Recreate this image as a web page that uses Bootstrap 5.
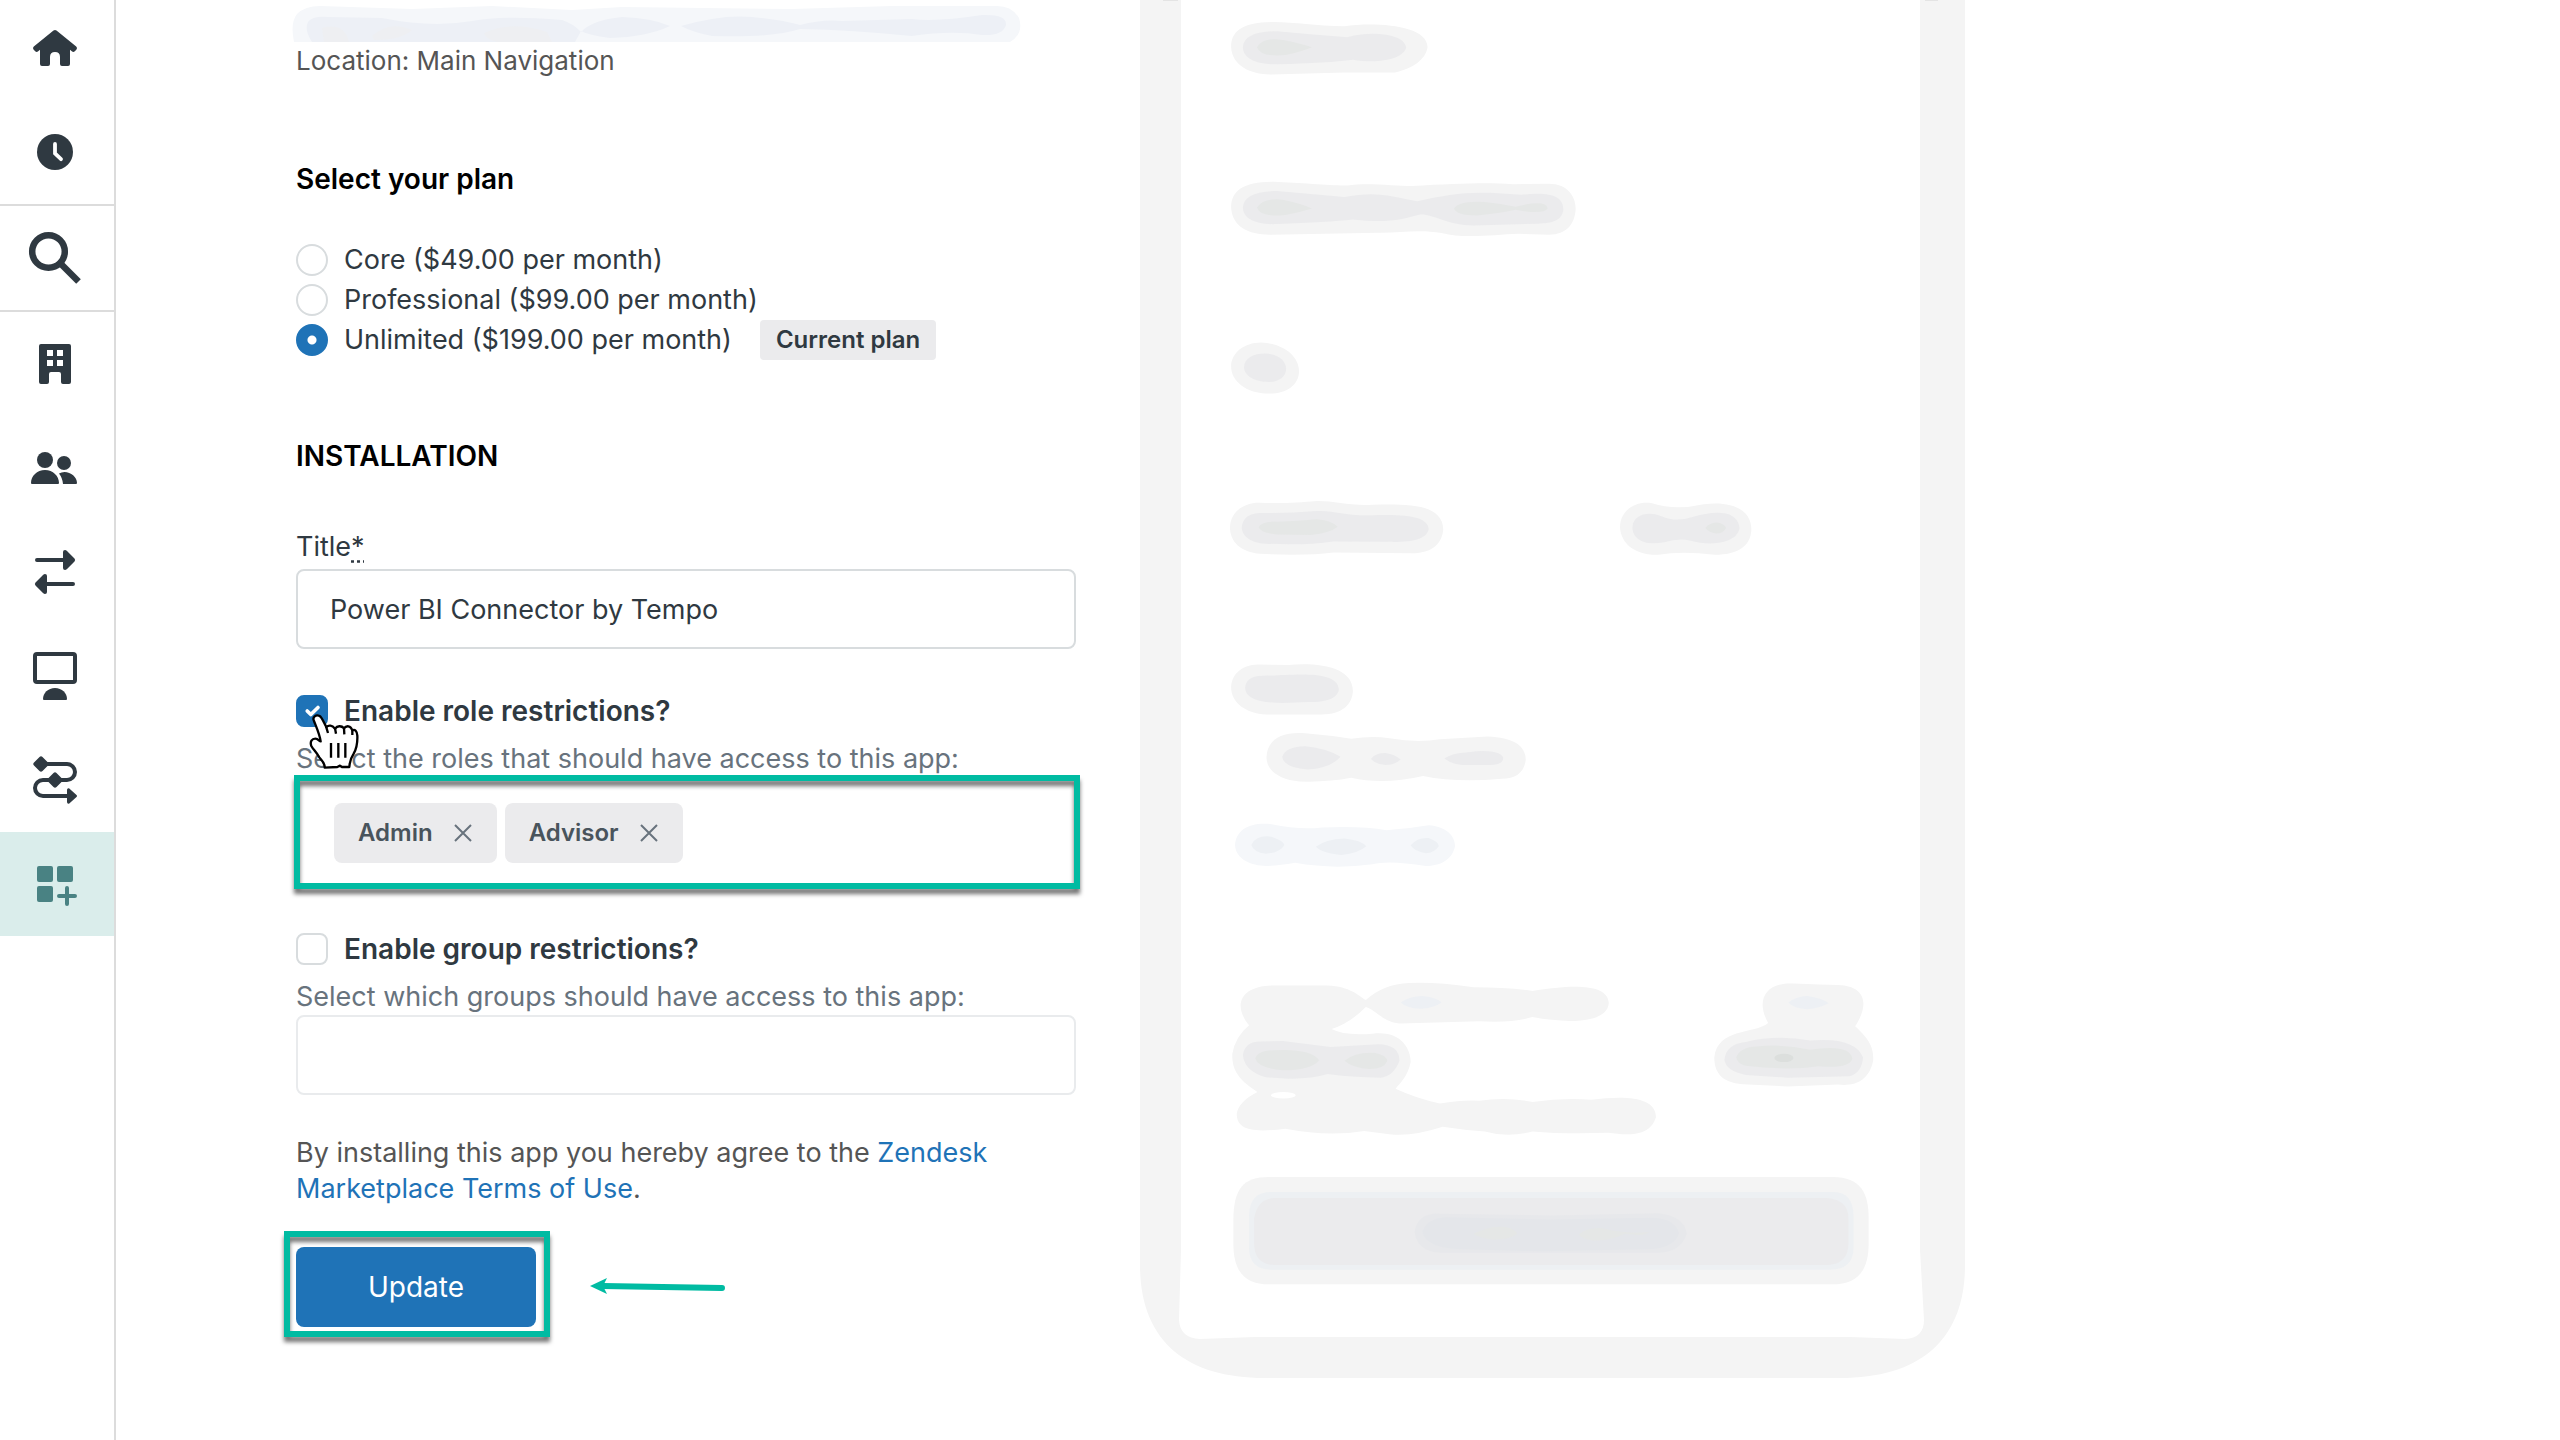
<!DOCTYPE html>
<html lang="en">
<head>
<meta charset="utf-8">
<meta name="viewport" content="width=device-width, initial-scale=1">
<title>App installation</title>
<link href="https://cdn.jsdelivr.net/npm/bootstrap@5.3.0/dist/css/bootstrap.min.css" rel="stylesheet">
<style>
  body { font-family: Inter, "Liberation Sans", sans-serif; font-size: 27px; line-height: 36px; color: #2f3941; background: #fff; }
  .side-rail { width: 116px; border-right: 2px solid #dcdcdc; color: #2f3941; }
  .side-rail a { display: block; color: inherit; }
  .side-rail svg { display: block; }
  .rail-search { border-top: 2px solid #dcdcdc; border-bottom: 2px solid #dcdcdc; }
  .side-rail .rail-active { background: #daedeb; color: #498283; }
  .workspace { padding-left: 180px; gap: 44px; min-width: 0; }
  .install-form { flex: 0 1 780px; min-width: 560px; }
  .redacted-line { display: block; margin-left: -4px; }
  .location-line { font-size: 26px; color: #555; margin: 1px 0 82px; }
  .section-title { font-size: 28px; line-height: 36px; font-weight: 600; color: #000; margin: 0; }
  .plan-list { margin: 43px 0 78px; }
  .choice-row { height: 40px; gap: 16px; }
  .choice-row .form-check-input { width: 32px; height: 32px; margin: 0; border: 2px solid #d8dcde; flex: none; }
  .choice-row .form-check-input[type=checkbox] { border-radius: 8px; }
  .choice-row .form-check-input:checked { background-color: #1f73b7; border-color: #1f73b7; }
  .choice-row .form-check-input:checked[type=radio] { background-image: radial-gradient(circle, #fff 4px, transparent 5px); }
  .choice-row .form-check-input:checked[type=checkbox] { background-size: 24px; }
  .plan-tag { background: #ebebed; border-radius: 4px; font-size: 24px; font-weight: 600; padding: 2px 16px; margin-left: 12px; }
  .title-label { margin: 55px 0 4px; }
  .title-label abbr { cursor: help; text-decoration: underline dotted; text-underline-offset: 4px; }
  .text-field { height: 80px; border: 2px solid #d8dcde; border-radius: 8px; padding: 0 32px; font-size: 27px; color: #2f3941; }
  .quiet-field { border-color: #e9ebed; }
  .restriction { margin-top: 42px; }
  .restriction label { font-size: 28px; font-weight: 600; }
  .hint-line { color: #68737d; margin: 10px 0 0; }
  .pointer-hand { left: 12px; top: 22px; z-index: 2; }
  .tag-field { height: 110px; padding: 26px 38px; gap: 8px; }
  .role-tag { height: 60px; background: #ebebed; border-radius: 8px; padding: 0 24px; gap: 20px; color: #49545c; font-size: 24px; font-weight: 600; }
  .role-tag button { color: #68737d; line-height: 0; }
  .marked::after { content: ""; position: absolute; border: 6px solid #00bba2; filter: drop-shadow(0 5px 2px rgba(0,0,0,.55)); pointer-events: none; }
  .tag-field::after { inset: -2px -4px -2px -2px; }
  .update-wrap::after { inset: -16px -14px -10px -12px; }
  .terms { color: #555; margin: 40px 0; }
  .terms a { color: #1f73b7; text-decoration: none; }
  .update-btn { width: 240px; height: 80px; background: #1f73b7; color: #fff; border: 0; border-radius: 8px; font-size: 28px; }
  .update-btn:hover { background: #144a75; color: #fff; }
  .arrow-note { margin-left: 50px; }
</style>
</head>
<body>
<div class="d-flex min-vh-100">
  <nav class="side-rail flex-shrink-0" aria-label="Main">
    <a href="#" aria-label="Home"><svg width="114" height="100" viewBox="0 0 114 100" fill="currentColor"><path d="M53.500 30.500Q55 29.300 56.500 30.500L76.200 46.600Q77.700 48 76.500 49.400L74.800 51.200Q73.400 52.600 71.800 51.200L70 49.800V64Q70 66 68 66H62Q60 66 60 64V57Q60 52 55 52T50 57V64Q50 66 48 66H42Q40 66 40 64V49.800L38.200 51.200Q36.600 52.600 35.200 51.200L33.500 49.400Q32.300 48 33.800 46.600Z"/></svg></a>
    <a href="#" aria-label="Recent"><svg width="114" height="104" viewBox="0 100 114 104"><circle cx="55" cy="152" r="18" fill="currentColor"/><path d="M55 144V153.500L61 159.200" fill="none" stroke="#fff" stroke-width="3.800" stroke-linecap="round"/></svg></a>
    <a href="#" class="rail-search" aria-label="Search"><svg width="114" height="104" viewBox="0 206 114 104" fill="none" stroke="currentColor"><circle cx="48.500" cy="251.500" r="16.300" stroke-width="6.500"/><path d="M60 263L78.500 281.500" stroke-width="6.500"/></svg></a>
    <a href="#" aria-label="Organizations"><svg width="114" height="104" viewBox="0 312 114 104" fill="currentColor"><path fill-rule="evenodd" d="M41 344H69Q71 344 71 346V382Q71 384 69 384H63Q61 384 61 382V374Q61 372 59 372H51Q49 372 49 374V382Q49 384 47 384H41Q39 384 39 382V346Q39 344 41 344ZM47 350V356H53V350ZM57 350V356H63V350ZM47 360V366H53V360ZM57 360V366H63V360Z"/></svg></a>
    <a href="#" aria-label="Customers"><svg width="114" height="104" viewBox="0 416 114 104" fill="currentColor"><circle cx="45" cy="460" r="8"/><circle cx="64" cy="463" r="7"/><path d="M31 483C31 476 37 470 45 470S59 476 59 483Q59 484 58 484H32Q31 484 31 483ZM59 473.500Q61.500 472 64.500 472C71 472 77 477 77 483Q77 484 76 484H63Q62.500 478 59 473.500Z"/></svg></a>
    <a href="#" aria-label="Transfers"><svg width="114" height="104" viewBox="0 520 114 104" fill="currentColor"><path d="M37 558H63V552Q63 550 65 550Q66 550 67 551L74.500 558.500Q75.800 560 74.500 561.500L67 569Q66 570 65 570Q63 570 63 568V562H37Q35 562 35 560T37 558ZM73 582H47V576Q47 574 45 574Q44 574 43 575L35.500 582.500Q34.200 584 35.500 585.500L43 593Q44 594 45 594Q47 594 47 592V586H73Q75 586 75 584T73 582Z"/></svg></a>
    <a href="#" aria-label="Workspaces"><svg width="114" height="104" viewBox="0 624 114 104"><rect x="35" y="654" width="40" height="28" rx="2" fill="none" stroke="currentColor" stroke-width="4"/><path d="M43 699C43 693 48 688 55 688S67 693 67 699Q67 700 66 700H44Q43 700 43 699Z" fill="currentColor"/></svg></a>
    <a href="#" aria-label="Workflows"><svg width="114" height="104" viewBox="0 728 114 104"><path d="M41 764H67A8 8 0 0 1 67 780H43A8 8 0 0 0 43 796H69" fill="none" stroke="currentColor" stroke-width="4"/><path d="M39.500 757Q41 755.500 42.500 757L48 762.500Q49.500 764 48 765.500L42.500 771Q41 772.500 39.500 771L34 765.500Q32.500 764 34 762.500ZM53.500 773Q55 771.500 56.500 773L62 778.500Q63.500 780 62 781.500L56.500 787Q55 788.500 53.500 787L48 781.500Q46.500 780 48 778.500ZM67 790Q67 788 69 788.300L76.500 795Q77.500 796 76.500 797L69 803.700Q67 804 67 802Z" fill="currentColor"/></svg></a>
    <a href="#" class="rail-active" aria-label="Apps" aria-current="page"><svg width="114" height="104" viewBox="0 832 114 104" fill="currentColor"><rect x="37" y="866" width="16" height="16" rx="2"/><rect x="57" y="866" width="16" height="16" rx="2"/><rect x="37" y="886" width="16" height="16" rx="2"/><path d="M67 888V904M59 896H75" stroke="currentColor" stroke-width="4" stroke-linecap="round"/></svg></a>
  </nav>

  <main class="workspace d-flex flex-grow-1 overflow-hidden">
    <form class="install-form" onsubmit="return false">
      <svg class="redacted-line" width="729" height="42" viewBox="0 0 729 42" aria-hidden="true">
        <path d="M2 42Q-2 23 5 14Q13 6 28 6L120 9 200 6 280 10 330 7 500 9 600 6 705 6Q720 6 727 18Q732 34 718 42Z" fill="#f5f7fa"/>
        <path d="M20 42Q12 30 16 22Q20 16 36 17L90 18Q140 28 180 21Q210 15 270 20Q282 24 289 32Q300 20 330 17Q360 18 378 26Q355 37 318 38Q296 35 289 31L283 42ZM389 26Q430 14 460 17Q490 20 508 25Q530 19 550 21L620 19Q645 22 690 15Q715 14 714 25Q711 36 690 35Q660 30 620 36Q560 30 508 29Q480 38 420 36Q400 32 389 26Z" fill="#edf0f6"/>
        <path d="M30 28Q52 22 57 42H32ZM80 36Q98 20 120 30Q110 40 82 40ZM192 33Q220 20 255 32L260 42H205Q192 38 192 33Z" fill="#eeeff2"/>
      </svg>
      <p class="location-line">Location: Main Navigation</p>

      <h2 class="section-title" id="plan-heading">Select your plan</h2>
      <div class="plan-list" role="radiogroup" aria-labelledby="plan-heading">
        <div class="choice-row d-flex align-items-center"><input class="form-check-input" type="radio" name="plan" id="plan-core"><label for="plan-core">Core ($49.00 per month)</label></div>
        <div class="choice-row d-flex align-items-center"><input class="form-check-input" type="radio" name="plan" id="plan-pro"><label for="plan-pro">Professional ($99.00 per month)</label></div>
        <div class="choice-row d-flex align-items-center"><input class="form-check-input" type="radio" name="plan" id="plan-unl" checked><label for="plan-unl">Unlimited ($199.00 per month)</label><span class="plan-tag">Current plan</span></div>
      </div>

      <h2 class="section-title">INSTALLATION</h2>
      <label class="title-label d-block" for="app-title">Title<abbr title="required">*</abbr></label>
      <input class="text-field form-control" id="app-title" type="text" value="Power BI Connector by Tempo">

      <div class="restriction">
        <div class="choice-row d-flex align-items-center position-relative">
          <input class="form-check-input" type="checkbox" id="role-limit" checked><label for="role-limit">Enable role restrictions?</label>
          <svg class="pointer-hand position-absolute" width="52" height="60" viewBox="84 126 156 180" aria-hidden="true"><path d="M102 150C96 138 108 130 119 135C126 139 130 152 139 168C146 162 156 162 165 173C172 164 184 163 192 172C199 163 212 163 217 178C225 174 231 180 232 194C233 218 228 236 221 248C213 260 209 272 208 288L186 288L180 284L172 288L134 290C135 276 126 270 118 259C108 242 100 236 94 225C89 212 96 203 106 203C115 203 119 212 122 211C119 190 108 166 102 150Z" fill="#fff" stroke="#000" stroke-width="7" stroke-linejoin="round"/><path d="M138 166L144 186M165 172L168 188M192 172L193 190M217 178L217 192M153 216V260M175 216V260M196 216V260" fill="none" stroke="#000" stroke-width="7"/></svg>
        </div>
        <p class="hint-line">Select the roles that should have access to this app:</p>
        <div class="tag-field marked position-relative d-flex">
          <span class="role-tag d-inline-flex align-items-center">Admin<button type="button" class="border-0 bg-transparent p-0" aria-label="Remove Admin"><svg width="20" height="20" viewBox="0 0 20 20"><path d="M2 2L18 18M18 2L2 18" stroke="currentColor" stroke-width="2"/></svg></button></span>
          <span class="role-tag d-inline-flex align-items-center">Advisor<button type="button" class="border-0 bg-transparent p-0" aria-label="Remove Advisor"><svg width="20" height="20" viewBox="0 0 20 20"><path d="M2 2L18 18M18 2L2 18" stroke="currentColor" stroke-width="2"/></svg></button></span>
        </div>
      </div>

      <div class="restriction">
        <div class="choice-row d-flex align-items-center"><input class="form-check-input" type="checkbox" id="group-limit"><label for="group-limit">Enable group restrictions?</label></div>
        <p class="hint-line" id="group-hint">Select which groups should have access to this app:</p>
        <input class="text-field quiet-field form-control" type="text" aria-labelledby="group-hint">
      </div>

      <p class="terms">By installing this app you hereby agree to the <a href="#">Zendesk Marketplace Terms of Use</a>.</p>
      <div class="d-flex align-items-center">
        <div class="update-wrap marked position-relative"><button class="btn update-btn" type="submit">Update</button></div>
        <svg class="arrow-note" width="144" height="24" viewBox="586 1274 144 24" aria-hidden="true"><path d="M603 1285L722 1287" stroke="#00bba2" stroke-width="6" stroke-linecap="round"/><path d="M590 1285L607 1277L603 1285L607 1293Z" fill="#00bba2"/></svg>
      </div>
    </form>

    <!-- Redacted phone preview: each half keeps its own drawing grid -->
    <svg class="flex-shrink-0" width="880" height="1400" viewBox="0 0 880 1400" aria-hidden="true">
      <path d="M20 0V1265C20 1340 65 1378 145 1378H720C800 1378 845 1340 845 1265V0H800V1250L804 1320Q804 1338 785 1339L730 1337H135L80 1339Q60 1338 59 1320L61 1250V0Z" fill="#f4f4f4"/>
      <path d="M43 0H58V1H43ZM805 0H818V1H805Z" fill="#e4e4e4"/>
      <g transform="scale(.5612 .4592)">
        <g fill="#f4f4f4">
          <path d="M198 103C198 70 215 48 275 48C310 48 350 57 400 57C450 48 548 52 548 103C545 130 520 150 490 158L400 158L270 162C235 163 200 145 198 103Z"/>
          <path d="M198 452C198 415 220 396 275 396C320 398 380 405 405 404C440 397 490 405 520 405C600 400 650 397 700 401L765 400C795 400 812 425 812 455C810 490 795 510 765 511L710 509C670 511 610 520 575 508C530 498 500 508 460 507L270 511C230 512 200 495 198 452Z"/>
          <path d="M198 798C198 770 220 746 252 746C290 748 319 775 319 808C319 840 295 858 265 857C225 857 198 830 198 798Z"/>
          <path d="M196 1148C197 1115 220 1094 250 1095C290 1097 320 1094 350 1091C380 1090 410 1102 450 1099C500 1099 575 1092 576 1153C574 1180 560 1204 520 1205L380 1203Q330 1211 250 1206C215 1202 196 1180 196 1148Z"/>
          <path d="M891 1148C891 1115 915 1090 948 1096Q990 1112 1040 1098C1090 1090 1125 1110 1125 1153C1124 1190 1100 1208 1060 1208Q1000 1199 960 1208C915 1210 892 1180 891 1148Z"/>
          <path d="M198 1497C199 1465 220 1448 245 1447L300 1448C360 1442 415 1455 415 1505C414 1535 395 1556 360 1556L260 1556C225 1554 198 1530 198 1497Z"/>
        </g>
        <g fill="#ebebed">
          <path d="M219 103C220 80 240 68 280 68Q340 75 405 81C440 68 505 70 510 103C505 130 460 139 415 130Q370 137 280 140C235 141 219 122 219 103Z"/>
          <path d="M219 452C220 428 240 416 280 416L400 429C460 415 480 428 530 438C580 425 610 418 660 420L715 424C765 418 790 425 790 457C788 480 770 487 745 487L630 491C580 490 560 466 535 467C500 478 480 486 415 478Q370 484 280 488C240 490 219 475 219 452Z"/>
          <path d="M221 800C221 780 238 770 258 770C280 770 296 785 296 803C296 823 280 832 264 832C240 832 221 818 221 800Z"/>
          <path d="M217 1148C220 1122 235 1117 255 1117Q300 1118 350 1113C380 1110 400 1124 450 1122C500 1121 550 1122 550 1153C545 1175 520 1181 480 1180L380 1179Q330 1188 260 1184C230 1182 217 1165 217 1148Z"/>
          <path d="M913 1148C915 1120 940 1112 965 1124Q990 1138 1020 1126C1060 1112 1100 1110 1104 1150C1100 1180 1060 1192 1015 1177Q995 1171 970 1181C930 1190 913 1170 913 1148Z"/>
          <path d="M223 1497C225 1475 240 1470 270 1471C310 1470 390 1458 390 1503C385 1525 360 1529 335 1529L290 1531C250 1530 223 1522 223 1497Z"/>
        </g>
        <path d="M244 103Q255 80 290 87Q325 95 342 103Q325 112 295 120Q250 125 244 103ZM244 452Q255 430 290 435Q325 444 342 454Q325 461 295 468Q250 474 244 452ZM595 454Q605 436 650 440Q680 444 705 450Q760 434 762 454Q755 468 705 457Q680 464 640 469Q600 470 595 454ZM247 1148Q252 1135 280 1136Q320 1135 350 1131Q375 1133 388 1147Q375 1160 340 1165L280 1164Q250 1160 247 1148ZM1043 1150Q1050 1138 1065 1138Q1078 1142 1080 1150Q1075 1162 1062 1162Q1050 1160 1043 1150Z" fill="#e5e7e6"/>
      </g>
      <g transform="translate(0 720) scale(.5612 .4592)">
        <g fill="#f4f4f4">
          <path d="M261 82C262 45 285 25 330 29Q370 33 412 41Q450 34 480 40Q530 50 570 42L655 36C700 38 723 55 723 87C720 115 705 128 680 128Q600 137 540 122Q470 142 412 126Q370 136 320 134C285 130 262 112 261 82Z"/>
          <path d="M230 665C200 620 215 578 275 578H370C410 580 425 600 438 610Q470 575 515 573Q560 570 630 582Q690 582 735 590C810 575 870 575 871 617C868 660 800 662 735 647Q700 660 640 656L500 661C470 660 455 630 438 625Q410 660 377 673Q400 688 450 683C500 675 518 715 518 745C513 775 500 790 491 803Q530 825 570 835Q610 827 640 829Q690 820 735 832Q790 822 840 827C900 818 955 820 955 865C945 905 910 906 870 899Q790 902 735 896Q690 910 650 896Q610 893 575 886Q520 908 480 902L435 895Q370 908 295 890C230 900 208 890 208 857Q212 830 245 810C205 780 200 755 200 728Q205 690 230 665Z"/>
          <path d="M1155 660C1130 605 1155 570 1200 574Q1250 577 1280 577C1330 580 1335 620 1310 667C1340 700 1343 720 1342 742C1335 785 1310 798 1280 794L1190 798L1110 793C1070 790 1059 765 1059 735C1065 670 1130 685 1155 660Z"/>
          <path d="M202 1090C202 1020 220 995 265 995H1270C1320 995 1334 1030 1334 1085V1140C1334 1205 1310 1229 1270 1229H265C225 1229 202 1205 202 1140Z"/>
        </g>
        <path d="M205 272C207 240 230 222 270 227Q320 240 360 234Q430 230 475 240Q520 235 550 229C580 232 597 250 597 275C592 305 570 318 545 318Q480 305 450 314Q380 326 312 311Q270 320 250 317C225 312 206 298 205 272Z" fill="#f5f7fa"/>
        <path d="M234 272Q242 250 270 254Q290 262 293 272Q285 289 260 291Q238 288 234 272ZM349 276Q365 260 400 258Q430 262 439 275Q425 290 395 294Q360 290 349 276ZM518 273Q530 255 550 257Q568 265 568 275Q560 290 545 290Q525 287 518 273ZM500 615Q515 602 540 601Q565 605 573 615Q560 627 535 629Q510 627 500 615ZM1191 615Q1205 602 1225 601Q1250 605 1263 617Q1245 628 1225 630Q1200 628 1191 615Z" fill="#edf0f4"/>
        <path d="M289 80Q295 58 330 57Q370 62 393 80Q375 105 335 108Q292 104 289 80ZM447 85Q455 72 473 72Q490 75 500 86Q490 98 473 98Q455 96 447 85ZM578 84Q590 72 620 70Q675 62 683 82Q682 98 660 98L610 98Q590 96 578 84ZM219 730Q222 700 250 700L290 699Q330 705 375 712L460 706Q498 707 498 742Q488 775 465 779Q410 778 370 771Q340 782 300 781L260 778Q222 765 219 730ZM1077 740Q1080 705 1115 701Q1170 685 1230 698Q1310 690 1324 735Q1322 768 1300 776L1190 779L1115 773Q1080 765 1077 740Z" fill="#ebebed"/>
        <path d="M241 737Q245 720 275 719Q340 715 355 741Q340 763 290 763Q245 757 241 737ZM400 742Q420 722 455 725Q476 730 476 743Q470 760 445 760Q415 758 400 742ZM1098 735Q1105 712 1135 711Q1180 705 1230 718Q1300 705 1305 737Q1300 760 1245 754Q1190 764 1115 753Q1100 748 1098 735Z" fill="#e5e7e6"/>
        <ellipse cx="1183" cy="736" rx="17" ry="9" fill="#dcdfdd"/>
        <ellipse cx="291" cy="817" rx="22" ry="7" fill="#fff"/>
        <path d="M230 1080Q230 1028 270 1028H1270Q1307 1028 1307 1080V1150Q1307 1197 1265 1197H270Q230 1197 230 1150Z" fill="#edf0f3"/>
        <path d="M239 1085Q245 1042 275 1041H1260Q1298 1045 1298 1085V1140Q1298 1185 1260 1187H275Q239 1185 239 1140Z" fill="#ebebed"/>
        <path d="M525 1115Q530 1073 570 1075L770 1079L960 1074Q1005 1080 1010 1118Q1000 1158 960 1160H570Q530 1158 525 1115Z" fill="#e7e8eb"/>
        <path d="M539 1115Q545 1087 580 1083L770 1088L950 1084Q990 1087 996 1118Q990 1145 950 1152L750 1157L600 1152Q545 1148 539 1115Z" fill="#e4e6ea"/>
        <path d="M630 1119Q660 1100 685 1104Q705 1108 708 1119Q695 1132 665 1132Q640 1128 630 1119ZM818 1120Q835 1104 860 1107Q900 1120 943 1115Q935 1125 900 1119Q870 1136 840 1133Q822 1130 818 1120Z" fill="#e5e7e6"/>
      </g>
    </svg>
  </main>
</div>
<script src="https://cdn.jsdelivr.net/npm/bootstrap@5.3.0/dist/js/bootstrap.bundle.min.js"></script>
</body>
</html>
